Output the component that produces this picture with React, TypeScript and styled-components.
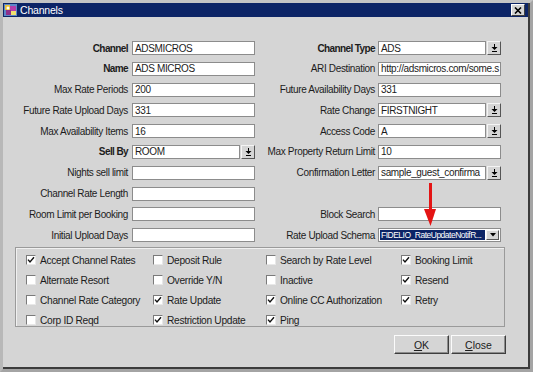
import React from "react";
import styled, { createGlobalStyle } from "styled-components";

const Global = createGlobalStyle`
  html, body { margin: 0; padding: 0; background: #d5d5d5; }
  body { font-family: "Liberation Sans", Arial, sans-serif; }
`;

const Window = styled.div`
  position: relative;
  width: 533px;
  height: 372px;
  box-sizing: border-box;
  border-style: solid;
  border-width: 3px;
  border-color: #c4c4c4 #a4a4a4 #a4a4a4 #b8b8b8;
  background: #d5d5d5;
  font-family: "Liberation Sans", Arial, sans-serif;
  font-size: 10px;
  letter-spacing: -0.35px;
  color: #1c1c1c;
`;

const Inner = styled.div`
  height: 100%;
  box-sizing: border-box;
  border-right: 2px solid #3c3c3c;
  border-bottom: 2px solid #3c3c3c;
  display: flex;
  flex-direction: column;
`;

const TitleBar = styled.div`
  height: 14px;
  background: #0c2466;
  display: flex;
  align-items: center;
  padding: 0 1px 0 1px;
  color: #fff;
  font-size: 10.5px;
  gap: 3px;
`;

const TitleText = styled.span`
  flex: 1;
  letter-spacing: -0.2px;
`;

const CloseBtn = styled.div`
  width: 12px;
  height: 10px;
  background: #d5d5d5;
  border: 1px solid;
  border-color: #fff #404040 #404040 #fff;
  display: flex;
  align-items: center;
  justify-content: center;
  margin-right: 2px;
`;

const Body = styled.div`
  flex: 1;
  padding-top: 24px;
  display: flex;
  flex-direction: column;
`;

const Form = styled.div`
  display: grid;
  grid-template-columns: 129px 123px 123px 123px;
  grid-auto-rows: 14px;
  row-gap: 6.8px;
`;

const Label = styled.div<{ $bold?: boolean; $pad: number }>`
  display: flex;
  align-items: center;
  justify-content: flex-end;
  padding-right: ${(p) => p.$pad}px;
  white-space: nowrap;
  font-weight: ${(p) => (p.$bold ? 700 : 400)};
  letter-spacing: ${(p) => (p.$bold ? "-0.6px" : "-0.35px")};
`;

const Input = styled.div`
  box-sizing: border-box;
  height: 14px;
  background: #fff;
  border: 1px solid #8c8c8c;
  padding-left: 2px;
  display: flex;
  align-items: center;
  white-space: nowrap;
  overflow: hidden;
`;

const Combo = styled.div`
  display: flex;
  height: 14px;
  gap: 1px;
`;

const ComboField = styled(Input)`
  flex: 1;
  min-width: 0;
`;

const ComboBtn = styled.div`
  width: 14px;
  box-sizing: border-box;
  height: 14px;
  background: #d5d5d5;
  border: 1px solid;
  border-color: #f4f4f4 #555 #555 #f4f4f4;
  display: flex;
  align-items: center;
  justify-content: center;
`;

const Schema = styled.div`
  box-sizing: border-box;
  height: 14px;
  background: #fff;
  border: 1px solid #8c8c8c;
  display: flex;
  align-items: stretch;
  padding: 1px;
  gap: 1px;
`;

const SchemaText = styled.div`
  flex: 1;
  min-width: 0;
  background: #0c2466;
  color: #fff;
  display: flex;
  align-items: center;
  padding-left: 1px;
  white-space: nowrap;
  font-size: 8.5px;
  letter-spacing: -0.5px;
`;

const SchemaBtn = styled.div`
  width: 11px;
  background: #d5d5d5;
  border: 1px solid;
  border-color: #f4f4f4 #555 #555 #f4f4f4;
  display: flex;
  align-items: center;
  justify-content: center;
`;

const Panel = styled.div`
  margin: 5px 0 0 12px;
  width: 490px;
  height: 80px;
  box-sizing: border-box;
  border: 1px solid #9a9a9a;
  box-shadow: inset 1px 1px 0 #f0f0f0;
  padding: 2px 0 0 10px;
  display: grid;
  grid-template-columns: 127px 113px 135px 1fr;
  grid-auto-rows: 20px;
`;

const Check = styled.div`
  display: flex;
  align-items: center;
  gap: 4px;
  white-space: nowrap;
  font-size: 10.2px;
  letter-spacing: -0.3px;
`;

const Box = styled.div`
  width: 10px;
  height: 10px;
  box-sizing: border-box;
  background: #fff;
  border: 1px solid;
  border-color: #7a7a7a #e8e8e8 #e8e8e8 #7a7a7a;
  display: flex;
  align-items: center;
  justify-content: center;
`;

const Buttons = styled.div`
  margin-top: 8px;
  padding-right: 22px;
  display: flex;
  justify-content: flex-end;
  gap: 2px;
`;

const Button = styled.div`
  width: 55px;
  height: 19px;
  box-sizing: border-box;
  background: #d5d5d5;
  border: 1px solid;
  border-color: #fbfbfb #3e3e3e #3e3e3e #fbfbfb;
  box-shadow: inset -1px -1px 0 #8c8c8c;
  display: flex;
  align-items: center;
  justify-content: center;
  font-size: 10.5px;
  letter-spacing: 0;
  u { text-decoration: underline; }
`;

const Arrow = styled.svg`
  position: absolute;
  left: 420px;
  top: 178px;
`;

const DropGlyph = () => (
  <svg width="7" height="8" viewBox="0 0 7 8">
    <rect x="3" y="0" width="1" height="3" fill="#000" />
    <polygon points="0.5,3 6.5,3 3.5,6" fill="#000" />
    <rect x="1" y="7" width="5" height="1" fill="#000" />
  </svg>
);

const TriGlyph = () => (
  <svg width="6" height="4" viewBox="0 0 6 4">
    <polygon points="0,0 6,0 3,3.5" fill="#000" />
  </svg>
);

const Tick = () => (
  <svg width="8" height="8" viewBox="0 0 8 8">
    <path d="M1 3.6 L3 6 L7 1.2" fill="none" stroke="#111" strokeWidth="1.4" />
  </svg>
);

type Cell =
  | { kind: "text"; value: string }
  | { kind: "combo"; value: string }
  | { kind: "schema"; value: string }
  | { kind: "none" };

type Row = {
  l: string;
  lb?: boolean;
  lc: Cell;
  r: string;
  rb?: boolean;
  rc: Cell;
};

const rows: Row[] = [
  { l: "Channel", lb: true, lc: { kind: "text", value: "ADSMICROS" }, r: "Channel Type", rb: true, rc: { kind: "combo", value: "ADS" } },
  { l: "Name", lb: true, lc: { kind: "text", value: "ADS MICROS" }, r: "ARI Destination", rc: { kind: "text", value: "http://adsmicros.com/some.s" } },
  { l: "Max Rate Periods", lc: { kind: "text", value: "200" }, r: "Future Availability Days", rc: { kind: "text", value: "331" } },
  { l: "Future Rate Upload Days", lc: { kind: "text", value: "331" }, r: "Rate Change", rc: { kind: "combo", value: "FIRSTNIGHT" } },
  { l: "Max Availability Items", lc: { kind: "text", value: "16" }, r: "Access Code", rc: { kind: "combo", value: "A" } },
  { l: "Sell By", lb: true, lc: { kind: "combo", value: "ROOM" }, r: "Max Property Return Limit", rc: { kind: "text", value: "10" } },
  { l: "Nights sell limit", lc: { kind: "text", value: "" }, r: "Confirmation Letter", rc: { kind: "combo", value: "sample_guest_confirma" } },
  { l: "Channel Rate Length", lc: { kind: "text", value: "" }, r: "", rc: { kind: "none" } },
  { l: "Room Limit per Booking", lc: { kind: "text", value: "" }, r: "Block Search", rc: { kind: "text", value: "" } },
  { l: "Initial Upload Days", lc: { kind: "text", value: "" }, r: "Rate Upload Schema", rc: { kind: "schema", value: "FIDELIO_RateUpdateNotifR..." } },
];

const renderCell = (c: Cell) => {
  switch (c.kind) {
    case "text":
      return <Input>{c.value}</Input>;
    case "combo":
      return (
        <Combo>
          <ComboField>{c.value}</ComboField>
          <ComboBtn>
            <DropGlyph />
          </ComboBtn>
        </Combo>
      );
    case "schema":
      return (
        <Schema>
          <SchemaText>{c.value}</SchemaText>
          <SchemaBtn>
            <TriGlyph />
          </SchemaBtn>
        </Schema>
      );
    default:
      return <div />;
  }
};

const checks: [string, boolean][][] = [
  [["Accept Channel Rates", true], ["Deposit Rule", false], ["Search by Rate Level", false], ["Booking Limit", true]],
  [["Alternate Resort", false], ["Override Y/N", false], ["Inactive", false], ["Resend", true]],
  [["Channel Rate Category", false], ["Rate Update", true], ["Online CC Authorization", true], ["Retry", true]],
  [["Corp ID Reqd", false], ["Restriction Update", true], ["Ping", true]],
];

const AppIcon = () => (
  <svg width="13" height="12" viewBox="0 0 13 12">
    <rect x="0" y="0" width="13" height="12" fill="#5d86c8" />
    <rect x="1" y="1" width="5" height="5" fill="#e8c23a" />
    <rect x="6" y="2" width="6" height="5" fill="#b43cab" />
    <rect x="2" y="6" width="5" height="5" fill="#8e2f8a" />
    <rect x="7" y="7" width="5" height="4" fill="#f0e070" />
    <circle cx="4" cy="4" r="1.5" fill="#fff" />
  </svg>
);

export default function App() {
  return (
    <>
      <Global />
      <Window>
        <Inner>
          <TitleBar>
            <AppIcon />
            <TitleText>Channels</TitleText>
            <CloseBtn>
              <svg width="8" height="7" viewBox="0 0 8 7">
                <path d="M1 0.5 L7 6.5 M7 0.5 L1 6.5" stroke="#000" strokeWidth="1.6" />
              </svg>
            </CloseBtn>
          </TitleBar>
          <Body>
            <Form>
              {rows.map((r, i) => (
                <React.Fragment key={i}>
                  <Label $bold={r.lb} $pad={4}>{r.l}</Label>
                  {renderCell(r.lc)}
                  <Label $bold={r.rb} $pad={3}>{r.r}</Label>
                  {renderCell(r.rc)}
                </React.Fragment>
              ))}
            </Form>
            <Panel>
              {checks.map((row, ri) =>
                [0, 1, 2, 3].map((ci) => {
                  const item = row[ci];
                  if (!item) return <div key={`${ri}-${ci}`} />;
                  return (
                    <Check key={`${ri}-${ci}`}>
                      <Box>{item[1] && <Tick />}</Box>
                      {item[0]}
                    </Check>
                  );
                })
              )}
            </Panel>
            <Buttons>
              <Button>
                <span><u>O</u>K</span>
              </Button>
              <Button>
                <span><u>C</u>lose</span>
              </Button>
            </Buttons>
          </Body>
        </Inner>
        <Arrow width="14" height="46" viewBox="0 0 14 46">
          <rect x="6" y="2" width="3" height="28" fill="#e41414" />
          <polygon points="1,28 13,28 7.5,45" fill="#e41414" />
        </Arrow>
      </Window>
    </>
  );
}
